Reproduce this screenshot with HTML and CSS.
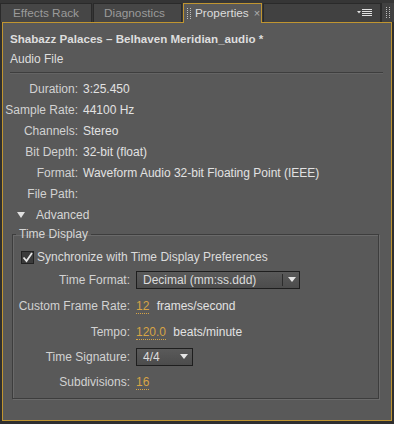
FILE: index.html
```html
<!DOCTYPE html>
<html lang="en">
<head>
    <meta charset="UTF-8">
    <title>Properties</title>
    <link rel="stylesheet" href="styles.css">
</head>
<body>

    <div class="tabbar">
        <div class="tab">Effects Rack</div>
        <div class="tab">Diagnostics</div>
        <div class="tab active"><span class="grip"></span>Properties <span class="close">×</span></div>
        <div class="tab-rest">
            <svg class="menu-icon" width="16" height="8" viewBox="0 0 16 8">
                <polygon points="0,2 4,2 2,4.5" fill="#e0e0e0"/>
                <rect x="5" y="0" width="10" height="1" fill="#e0e0e0"/>
                <rect x="5" y="2" width="10" height="1" fill="#e0e0e0"/>
                <rect x="5" y="4" width="10" height="1" fill="#e0e0e0"/>
                <rect x="5" y="6" width="10" height="1" fill="#e0e0e0"/>
            </svg>
        </div>
        <div class="tab-grip"><span class="grip"></span></div>
    </div>

    <div class="panel">
        <div class="title">Shabazz Palaces – Belhaven Meridian_audio *</div>
        <div class="subtitle">Audio File</div>
        <div class="separator"></div>

        <div class="info">
            <span class="label">Duration:</span><span class="value">3:25.450</span>
            <span class="label">Sample Rate:</span><span class="value">44100 Hz</span>
            <span class="label">Channels:</span><span class="value">Stereo</span>
            <span class="label">Bit Depth:</span><span class="value">32-bit (float)</span>
            <span class="label">Format:</span><span class="value">Waveform Audio 32-bit Floating Point (IEEE)</span>
            <span class="label">File Path:</span><span class="value"></span>
        </div>

        <div class="advanced"><span class="triangle"></span>Advanced</div>

        <fieldset class="group">
            <legend>Time Display</legend>
            <label class="check-row">
                <span class="checkbox">
                    <svg width="11" height="11" viewBox="0 0 11 11">
                        <path d="M1.5 5.5 L4.5 9 L10 1" fill="none" stroke="#e6e6e6" stroke-width="1.8"/>
                    </svg>
                </span>
                Synchronize with Time Display Preferences
            </label>
            <div class="settings">
                <span class="label">Time Format:</span>
                <div class="dropdown wide"><span>Decimal (mm:ss.ddd)</span><span class="drop-arrow"></span></div>

                <span class="label">Custom Frame Rate:</span>
                <span class="value"><span class="num">12</span> frames/second</span>

                <span class="label">Tempo:</span>
                <span class="value"><span class="num">120.0</span> beats/minute</span>

                <span class="label">Time Signature:</span>
                <div class="dropdown small"><span>4/4</span><span class="drop-arrow plain"></span></div>

                <span class="label">Subdivisions:</span>
                <span class="value"><span class="num">16</span></span>
            </div>
        </fieldset>
    </div>

</body>
</html>
```

FILE: styles.css
```css
body {
    margin: 0;
    background-color: #2f2f2f;
    font-family: 'Liberation Sans', Arial, sans-serif;
    font-size: 12px;
    color: #d6d6d6;
}

.tabbar {
    display: flex;
    align-items: flex-end;
    height: 22px;
    background-color: #363636;
}

.tab {
    height: 19px;
    line-height: 19px;
    box-sizing: border-box;
    padding: 0 0 0 12px;
    white-space: nowrap;
    background-color: #464646;
    color: #9b9b9b;
    font-size: 11.8px;
    border: 1px solid #2a2a2a;
    border-bottom: none;
    margin-right: 1px;
}

.tab:first-child {
    width: 92px;
}

.tab:nth-child(2) {
    width: 89px;
    padding-left: 10px;
}

.tab.active {
    position: relative;
    z-index: 1;
    display: flex;
    align-items: center;
    width: 79px;
    height: 20px;
    margin-bottom: -1px;
    padding: 0 0 0 3px;
    background-color: #595959;
    border: 1px solid #c09530;
    border-bottom: none;
    color: #dcdcdc;
}

.tab.active .grip {
    margin-right: 4px;
}

.close {
    margin-left: 5px;
    font-size: 11px;
    color: #b0b0b0;
}

.grip {
    display: inline-block;
    width: 2px;
    height: 11px;
    border-left: 1px dotted #bdbdbd;
    border-right: 1px dotted #bdbdbd;
}

.tab-rest {
    flex: 1;
    height: 19px;
    box-sizing: border-box;
    display: flex;
    align-items: center;
    justify-content: flex-end;
    padding-right: 7px;
    background-color: #414141;
    border: 1px solid #2a2a2a;
    border-bottom: none;
}

.menu-icon {
    display: block;
}

.tab-grip {
    width: 13px;
    height: 19px;
    box-sizing: border-box;
    display: flex;
    align-items: center;
    justify-content: center;
    background-color: #414141;
    border-left: 1px solid #2a2a2a;
}

.panel {
    margin: 0 2px;
    height: 399px;
    box-sizing: border-box;
    border: 1px solid #c09530;
    background-color: #595959;
    padding: 5px 0 0 0;
}

.title {
    line-height: 21px;
    padding-left: 7px;
    font-size: 11.6px;
    font-weight: bold;
    color: #dedede;
}

.subtitle {
    line-height: 21px;
    padding-left: 7px;
    color: #dedede;
}

.separator {
    height: 1px;
    margin: 2px 8px 5px 7px;
    background-color: #3e3e3e;
    border-bottom: 1px solid #646464;
}

.info {
    display: grid;
    grid-template-columns: 75px 1fr;
    column-gap: 5px;
}

.label {
    text-align: right;
    line-height: 21px;
    color: #d2d2d2;
}

.value {
    line-height: 21px;
    color: #e2e2e2;
}

.advanced {
    display: flex;
    align-items: center;
    height: 20px;
    padding-left: 14px;
    color: #d6d6d6;
}

.triangle {
    width: 0;
    height: 0;
    margin-right: 11px;
    border-left: 4px solid transparent;
    border-right: 4px solid transparent;
    border-top: 6px solid #e0e0e0;
}

.group {
    margin: 2px 12px 0 9px;
    padding: 6px 0 4px 0;
    border: 1px solid #3d3d3d;
    box-shadow: 1px 1px 0 #6a6a6a, inset 1px 1px 0 #6a6a6a;
}

.group legend {
    margin-left: 3px;
    padding: 0 3px;
    color: #d6d6d6;
}

.check-row {
    display: flex;
    align-items: center;
    height: 20px;
    padding-left: 8px;
    color: #dcdcdc;
}

.checkbox {
    display: flex;
    align-items: center;
    justify-content: center;
    width: 13px;
    height: 13px;
    box-sizing: border-box;
    margin-right: 3px;
    background-color: #3b3b3b;
    border: 1px solid #222;
}

.settings {
    display: grid;
    grid-template-columns: 117px auto;
    grid-template-rows: 24px 28px 24px 26px 24px;
    column-gap: 6px;
    align-items: center;
    justify-items: start;
    margin-top: 1px;
}

.settings .label {
    justify-self: end;
}

.dropdown {
    display: flex;
    align-items: center;
    height: 18px;
    box-sizing: border-box;
    padding-left: 6px;
    background: linear-gradient(#5a5a5a, #4c4c4c);
    border: 1px solid #1e1e1e;
    color: #dcdcdc;
}

.dropdown span:first-child {
    flex: 1;
}

.dropdown.wide {
    width: 164px;
}

.dropdown.small {
    width: 57px;
}

.drop-arrow {
    width: 17px;
    height: 12px;
    box-sizing: border-box;
    border-left: 1px solid #2c2c2c;
    position: relative;
}

.drop-arrow::after {
    content: "";
    position: absolute;
    left: 5px;
    top: 3px;
    border-left: 4px solid transparent;
    border-right: 4px solid transparent;
    border-top: 5px solid #e6e6e6;
}

.drop-arrow.plain {
    border-left: none;
}

.num {
    color: #d7a445;
    border-bottom: 1px dotted #d7a445;
    line-height: 14px;
    display: inline-block;
    margin-right: 4px;
}
```
